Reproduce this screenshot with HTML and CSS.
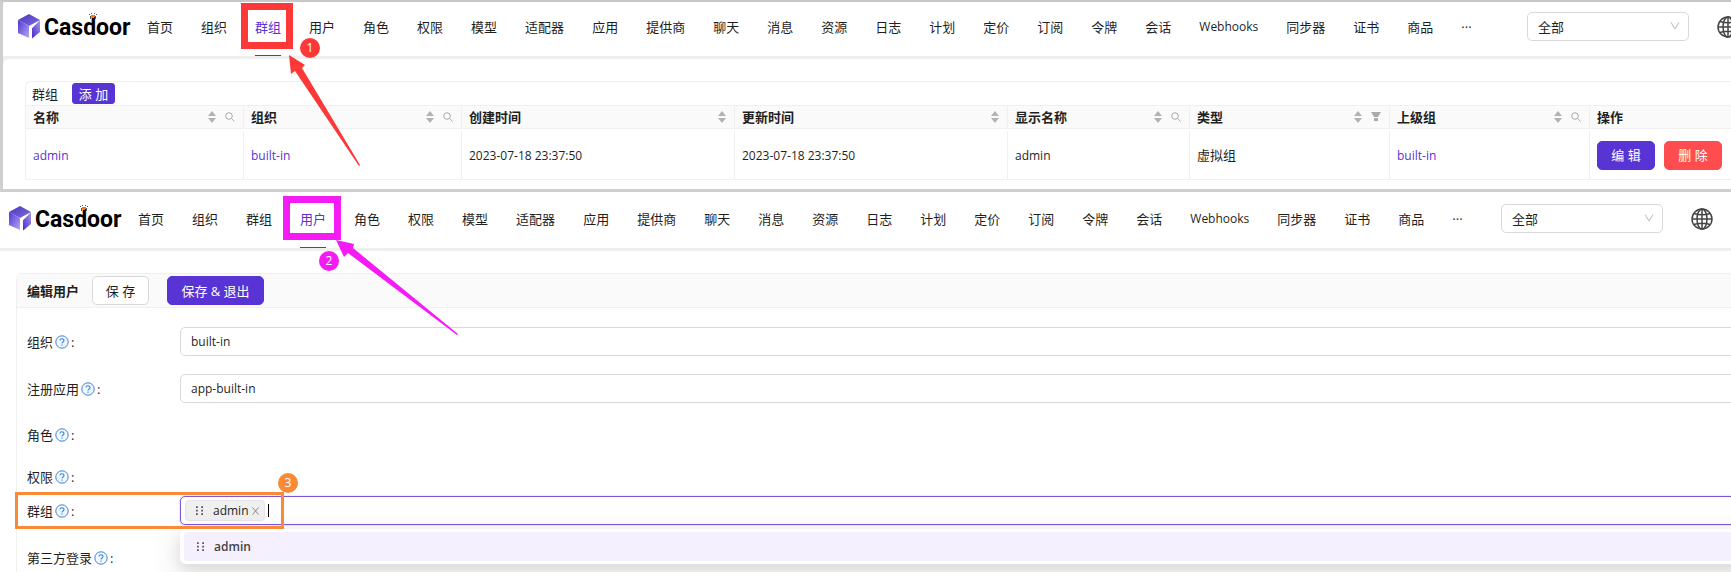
FILE: index.html
```html
<!DOCTYPE html>
<html lang="zh-CN">
<head>
<meta charset="utf-8">
<meta name="viewport" content="width=device-width, initial-scale=1">
<title>Casdoor</title>
<link rel="stylesheet" href="styles.css">
</head>
<body>
<svg class="defs" aria-hidden="true">
  <defs>
    <linearGradient id="g-top" x1="0" y1="0" x2="1" y2="1"><stop offset="0" stop-color="#4a35c4"/><stop offset="1" stop-color="#7d6dd8"/></linearGradient>
    <linearGradient id="g-left" x1="0" y1="0" x2="1" y2="1"><stop offset="0" stop-color="#5235d6"/><stop offset="1" stop-color="#b3a8ee"/></linearGradient>
    <linearGradient id="g-right" x1="1" y1="0" x2="0" y2="1"><stop offset="0" stop-color="#a79be6"/><stop offset="1" stop-color="#4826cc"/></linearGradient>
    <symbol id="cube" viewBox="0 0 22 25">
      <path d="M11 0 22 6 11 12 0 6Z" fill="url(#g-top)"/>
      <path d="M0 6 11 12V24L0 19Z" fill="url(#g-left)"/>
      <path d="M22 6V18L14 24.500V14Z" fill="url(#g-right)"/>
      <path d="M11 12.500 20 8 14 14V24.500L11 23.500Z" fill="#fff"/>
    </symbol>
    <symbol id="crown" viewBox="0 0 8 7">
      <path d="M0 1h1v1H0zM7 1h1v1H7zM2 0h1v1H2zM5 0h1v1H5zM1 3h1v3H1zM6 3h1v3H6z" fill="#555"/>
      <path d="M2 2h4v2H5v1H3V4H2z" fill="#f47a20"/>
    </symbol>
    <symbol id="globe" viewBox="0 0 22 22">
      <g fill="none" stroke="#444" stroke-width="1.500"><circle cx="11" cy="11" r="10"/><ellipse cx="11" cy="11" rx="5" ry="10"/><path d="M11 1V21M1 11H21M3 5.500Q11 8 19 5.500M3 16.500Q11 14 19 16.500"/></g>
    </symbol>
    <symbol id="chevron" viewBox="0 0 10 10"><path d="M1 1.500 5 8 9 1.500" fill="none" stroke="#b8b8b8" stroke-width="1"/></symbol>
    <symbol id="sort" viewBox="0 0 8 12"><path d="M4 0 8 5H0ZM0 7H8L4 12Z" fill="#b3b3b3"/></symbol>
    <symbol id="search" viewBox="0 0 10 10"><g fill="none" stroke="#aaa"><circle cx="4" cy="4" r="3.300"/><path d="M6.500 6.500 9.500 9.500"/></g></symbol>
    <symbol id="filter" viewBox="0 0 10 10"><path d="M0 0H10L7 5H3ZM3 6H7V9H3Z" fill="#aaa"/></symbol>
    <symbol id="help" viewBox="0 0 14 14"><circle cx="7" cy="7" r="6.200" fill="#f2f8ff" stroke="#3c83d8"/><path d="M5 5.600C5 3.200 9 3.200 9 5.500 9 7 7 6.900 7 8.600M7 9.600V10.700" fill="none" stroke="#3c83d8" stroke-width="1.100"/></symbol>
    <symbol id="grip" viewBox="0 0 8 10"><path d="M0 0h2v2H0zM6 0h2v2H6zM0 4h2v2H0zM6 4h2v2H6zM0 8h2v2H0zM6 8h2v2H6z" fill="#555"/></symbol>
    <symbol id="close" viewBox="0 0 7 8"><path d="M.5 .5 6.500 7.500M6.500 .5 .5 7.500" fill="none" stroke="#888"/></symbol>
  </defs>
</svg>

<section class="shot shot--groups">
  <header class="topbar">
    <a class="logo" href="#"><svg class="logo__cube"><use href="#cube"/></svg><span>Casdoor</span><svg class="logo__crown"><use href="#crown"/></svg></a>
    <nav class="nav">
      <a href="#">首页</a><a href="#">组织</a><a class="is-active" href="#">群组</a><a href="#">用户</a><a href="#">角色</a><a href="#">权限</a><a href="#">模型</a><a href="#">适配器</a><a href="#">应用</a><a href="#">提供商</a><a href="#">聊天</a><a href="#">消息</a><a href="#">资源</a><a href="#">日志</a><a href="#">计划</a><a href="#">定价</a><a href="#">订阅</a><a href="#">令牌</a><a href="#">会话</a><a class="latin" href="#">Webhooks</a><a href="#">同步器</a><a href="#">证书</a><a href="#">商品</a><a href="#">···</a>
    </nav>
    <div class="picker"><select aria-label="组织"><option>全部</option></select><svg><use href="#chevron"/></svg></div>
    <button class="globe" aria-label="语言"><svg><use href="#globe"/></svg></button>
  </header>
  <main class="content">
    <div class="listing">
      <div class="listing__title"><span>群组</span><button class="btn btn--primary btn--small">添 加</button></div>
      <table class="grid">
        <colgroup><col class="c-org"><col class="c-org"><col class="c-time"><col class="c-time"><col class="c-display"><col class="c-type"><col class="c-type"><col></colgroup>
        <thead><tr>
          <th><div><span>名称</span><svg class="i-sort"><use href="#sort"/></svg><svg class="i-find"><use href="#search"/></svg></div></th>
          <th><div><span>组织</span><svg class="i-sort"><use href="#sort"/></svg><svg class="i-find"><use href="#search"/></svg></div></th>
          <th><div><span>创建时间</span><svg class="i-sort"><use href="#sort"/></svg></div></th>
          <th><div><span>更新时间</span><svg class="i-sort"><use href="#sort"/></svg></div></th>
          <th><div><span>显示名称</span><svg class="i-sort"><use href="#sort"/></svg><svg class="i-find"><use href="#search"/></svg></div></th>
          <th><div><span>类型</span><svg class="i-sort"><use href="#sort"/></svg><svg class="i-find"><use href="#filter"/></svg></div></th>
          <th><div><span>上级组</span><svg class="i-sort"><use href="#sort"/></svg><svg class="i-find"><use href="#search"/></svg></div></th>
          <th><div><span>操作</span></div></th>
        </tr></thead>
        <tbody><tr>
          <td class="latin"><a href="#">admin</a></td>
          <td class="latin"><a href="#">built-in</a></td>
          <td class="latin">2023-07-18 23:37:50</td>
          <td class="latin">2023-07-18 23:37:50</td>
          <td class="latin">admin</td>
          <td>虚拟组</td>
          <td class="latin"><a href="#">built-in</a></td>
          <td><div class="actions"><button class="btn btn--primary">编 辑</button><button class="btn btn--danger">删 除</button></div></td>
        </tr></tbody>
      </table>
    </div>
  </main>
</section>

<section class="shot shot--user">
  <header class="topbar">
    <a class="logo" href="#"><svg class="logo__cube"><use href="#cube"/></svg><span>Casdoor</span><svg class="logo__crown"><use href="#crown"/></svg></a>
    <nav class="nav">
      <a href="#">首页</a><a href="#">组织</a><a href="#">群组</a><a class="is-active" href="#">用户</a><a href="#">角色</a><a href="#">权限</a><a href="#">模型</a><a href="#">适配器</a><a href="#">应用</a><a href="#">提供商</a><a href="#">聊天</a><a href="#">消息</a><a href="#">资源</a><a href="#">日志</a><a href="#">计划</a><a href="#">定价</a><a href="#">订阅</a><a href="#">令牌</a><a href="#">会话</a><a class="latin" href="#">Webhooks</a><a href="#">同步器</a><a href="#">证书</a><a href="#">商品</a><a href="#">···</a>
    </nav>
    <div class="picker"><select aria-label="组织"><option>全部</option></select><svg><use href="#chevron"/></svg></div>
    <button class="globe" aria-label="语言"><svg><use href="#globe"/></svg></button>
  </header>
  <main class="card">
    <div class="card__head"><h2>编辑用户</h2><button class="btn btn--save">保 存</button><button class="btn btn--primary btn--exit">保存 &amp; 退出</button></div>
    <form class="form">
      <div class="row"><label for="org">组织<svg><use href="#help"/></svg>:</label><select class="field" id="org"><option>built-in</option></select></div>
      <div class="row"><label for="app">注册应用<svg><use href="#help"/></svg>:</label><select class="field" id="app"><option>app-built-in</option></select></div>
      <div class="row row--plain"><span class="label">角色<svg><use href="#help"/></svg>:</span></div>
      <div class="row row--plain"><span class="label">权限<svg><use href="#help"/></svg>:</span></div>
      <div class="row row--groups"><label for="groups">群组<svg><use href="#help"/></svg>:</label>
        <div class="field field--focus">
          <span class="tag"><svg class="i-grip"><use href="#grip"/></svg>admin<button type="button" aria-label="移除 admin"><svg class="i-close"><use href="#close"/></svg></button></span>
          <span class="caret"></span><input id="groups" type="text">
          <ul class="menu"><li><svg class="i-grip"><use href="#grip"/></svg>admin</li></ul>
        </div>
      </div>
      <div class="row row--plain"><span class="label">第三方登录<svg><use href="#help"/></svg>:</span></div>
    </form>
  </main>
</section>

<svg class="marks" width="480" height="572" viewBox="0 0 480 572">
  <g fill="none">
    <rect x="244.500" y="6.500" width="45" height="39" stroke="#fc3838" stroke-width="7"/>
    <rect x="286.500" y="199.500" width="51" height="37" stroke="#f51bf5" stroke-width="7"/>
    <rect x="16.500" y="493.500" width="266" height="34" stroke="#f98a38" stroke-width="3"/>
  </g>
  <g fill="#fc3838"><path d="M289 55 305 65 302 68 360 165 359 166 295 71 291 74Z"/><circle cx="310" cy="48" r="10"/></g>
  <g fill="#f51bf5"><path d="M336 240 354 244 353 248 458 334 457 335 348 253 344 257Z"/><circle cx="329" cy="261" r="10"/></g>
  <circle cx="288" cy="483" r="10" fill="#f98a38"/>
  <g class="marks__num"><text x="310" y="52">1</text><text x="329" y="265">2</text><text x="288" y="487">3</text></g>
</svg>
</body>
</html>
```
FILE: styles.css
```css
* { box-sizing: border-box; }

body {
  margin: 0;
  position: relative;
  overflow: hidden;
  background: #fff;
  color: #1f1f1f;
  font: 13px/20px "Open Sans", "Noto Sans CJK SC", sans-serif;
}

a { color: #5734d3; text-decoration: none; }
button, input, select { font: inherit; color: inherit; margin: 0; }
svg { display: block; flex: none; }
.defs { position: absolute; width: 0; height: 0; }
.latin { font-size: 12px; }

.shot { border-top: 2px solid #c8c8c8; overflow: hidden; }
.shot--groups { border-left: 3px solid #cfcfcf; background: #efefef; }
.shot--user { border-top: 3px solid #cfcfcf; }

/* Top bar */
.topbar {
  display: flex;
  align-items: center;
  height: 57px;
  padding: 0 18px 5px 15px;
  border-bottom: 3px solid #efefef;
  background: #fff;
}
.shot--groups .topbar { margin-right: -26px; border-top-left-radius: 4px; }
.shot--user .topbar { height: 59px; padding-top: 2px; padding-left: 9px; }

.logo { position: relative; display: flex; align-items: center; width: 129px; flex: none; gap: 4px; }
.logo span { font: 700 23px/24px Roboto, sans-serif; color: #000; padding-top: 3px; }
.logo__cube { width: 22px; height: 25px; }
.logo__crown { position: absolute; left: 71px; top: 0; width: 8px; height: 7px; }

.nav { display: flex; flex: 1; gap: 28px; white-space: nowrap; align-self: flex-start; }
.nav a { height: 54px; line-height: 50px; color: #1f1f1f; border-bottom: 1px solid transparent; }
.nav .is-active { color: #5734d3; border-color: #5734d3; }

.picker { position: relative; flex: none; width: 162px; margin-right: 28px; }
.picker select {
  display: block;
  width: 100%;
  height: 29px;
  padding: 0 10px;
  border: 1px solid #d9d9d9;
  border-radius: 5px;
  background: #fff;
  appearance: none;
}
.picker svg { position: absolute; right: 9px; top: 9px; width: 10px; height: 10px; pointer-events: none; }
.globe { padding: 0; border: 0; background: none; flex: none; }
.globe svg { width: 22px; height: 22px; }

/* Buttons */
.btn {
  height: 29px;
  width: 58px;
  padding: 0;
  border: 1px solid #d9d9d9;
  border-radius: 5px;
  background: #fff;
  line-height: 20px;
  white-space: nowrap;
}
.btn--primary { background: #5734d3; border-color: #5734d3; color: #fff; }
.btn--danger { background: #ff4d4f; border-color: #ff4d4f; color: #fff; }
.btn--small { height: 21px; width: 43px; border-radius: 3px; line-height: 18px; }

/* Group list */
.content { padding: 22px 0 9px 22px; background: #fff; border-top-left-radius: 6px; }
.listing { border: 1px solid #f0f0f0; border-right: 0; border-radius: 6px 0 0 0; }
.listing__title { display: flex; align-items: center; gap: 14px; height: 23px; padding-left: 6px; }
.grid { width: 100%; table-layout: fixed; border-collapse: separate; border-spacing: 0; }
.c-org { width: 218px; }
.c-time { width: 273px; }
.c-display { width: 182px; }
.c-type { width: 200px; }
.grid th, .grid td { padding: 0 8px 0 7px; border-right: 1px solid #f0f0f0; text-align: left; }
.grid th:last-child, .grid td:last-child { border-right: 0; }
.grid th { height: 24px; background: #fafafa; border-top: 1px solid #f0f0f0; border-bottom: 1px solid #f0f0f0; font-weight: 700; }
.grid th div { display: flex; align-items: center; gap: 9px; }
.grid th span { flex: 1; }
.grid tbody::before { content: ""; display: block; height: 2px; }
.grid td { height: 48px; }
.grid .latin { padding-top: 2px; }
.i-sort { width: 8px; height: 12px; }
.i-find { width: 10px; height: 10px; }
.actions { display: flex; gap: 9px; }

/* User form */
.card { margin: 22px -20px 0 16px; border: 1px solid #f0f0f0; border-radius: 6px; }
.card__head { display: flex; align-items: center; height: 34px; padding-left: 10px; background: #fafafa; border-bottom: 1px solid #f0f0f0; }
.card__head h2 { margin: 0 13px 0 0; font-size: 13px; font-weight: 600; }
.btn--save { width: 57px; }
.btn--exit { width: 97px; margin-left: 18px; }
.form { padding: 19px 0 4px 10px; }
.row { display: flex; align-items: center; margin-bottom: 18px; }
.row--plain { margin: 22px 0; }
.row--groups { margin: -13px 0 23px; }
.row label, .label { display: flex; align-items: center; gap: 2px; flex: 0 0 153px; }
.row label svg, .label svg { width: 14px; height: 14px; }
.field {
  flex: 1;
  height: 29px;
  padding: 1px 10px 0;
  border: 1px solid #d9d9d9;
  border-radius: 5px;
  background: #fff;
  font-size: 12px;
  appearance: none;
}
.field--focus { position: relative; display: flex; align-items: center; padding: 0 4px; border-color: #7b57dc; box-shadow: 0 0 0 1px #f1ebfd; }
.field--focus input { flex: 1; min-width: 0; border: 0; outline: 0; padding: 0; background: none; }
.tag { display: flex; align-items: center; height: 21px; width: 80px; padding: 0 5px 0 10px; border: 1px solid #e4e4e4; border-radius: 4px; background: #f0f0f0; }
.tag button { margin-left: auto; padding: 0; border: 0; background: none; }
.i-grip { width: 7px; height: 9px; margin-right: 10px; }
.i-close { width: 7px; height: 8px; }
.caret { width: 1px; height: 13px; margin-left: 3px; background: #000; }
.menu {
  position: absolute;
  top: 32px;
  left: -1px;
  right: 0;
  margin: 0;
  padding: 3px 4px;
  list-style: none;
  background: #fff;
  border-radius: 6px;
  box-shadow: 0 6px 16px rgba(0, 0, 0, .1), 0 9px 28px 8px rgba(0, 0, 0, .06);
}
.menu li { display: flex; align-items: center; height: 29px; padding-left: 13px; border-radius: 4px; background: #f5f0fe; font-weight: 600; color: #444; }

/* Numbered callouts */
.marks { position: absolute; left: 0; top: 0; pointer-events: none; }
.marks__num { fill: #fff; font: 12px "Open Sans", sans-serif; text-anchor: middle; }
```
